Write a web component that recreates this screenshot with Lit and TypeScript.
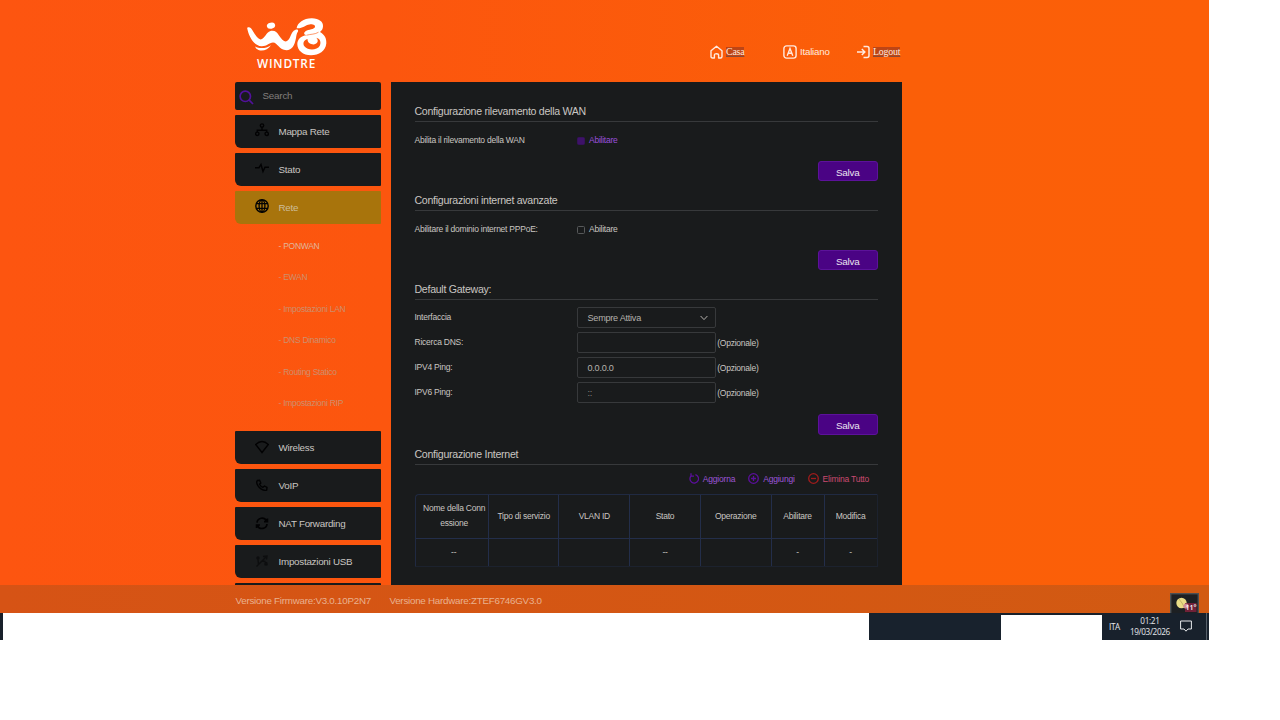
import { LitElement, html, css, svg } from "lit";
import { customElement } from "lit/decorators.js";

const icons: Record<string, unknown> = {
  map: svg`<circle cx="7" cy="2.6" r="1.7"/><circle cx="2.3" cy="10.8" r="1.7"/><circle cx="11.7" cy="10.8" r="1.7"/><path d="M7 4.3V7M2.3 9V7.2H11.7V9"/>`,
  pulse: svg`<path d="M0 6.7H4L6 3.5L8 10.5L10 6.2H14"/>`,
  globe: svg`<circle cx="7" cy="7" r="6.2"/><ellipse cx="7" cy="7" rx="2.9" ry="6" stroke-width="1.3"/><path stroke-width="1.3" d="M7 1V13M1.5 4.7H12.5M1.5 9.3H12.5"/>`,
  wifi: svg`<path d="M7 12.5L.7 4.4Q7-1.2 13.3 4.4Z"/>`,
  phone: svg`<path d="M2.4 2.5L4.6 2.3L5.8 5L4.5 6.2Q5.6 8.4 8 9.3L9.5 8L12 9.3L11.7 12.1Q9.3 13 6 10.9Q1.7 7.6 1.7 4Z"/>`,
  sync: svg`<path stroke-width="1.7" d="M2 6.6A5 5 0 0 1 11.4 4.8M12.4 2.5V5.6H9M12 8A5 5 0 0 1 2.6 9.8M1.6 12.1V9H5"/>`,
  usb: svg`<path d="M1.5 12.5L11.5 2.5M3.5 10.5L3 5.5M7 7L10.5 7.5M8 2.5L12 2L11.5 5.5M9.5 10.8H12.5"/><circle cx="3" cy="4" r="1"/><circle cx="11" cy="9.5" r="1"/>`,
};

const top = [
  { label: "Mappa Rete", icon: "map" },
  { label: "Stato", icon: "pulse" },
  { label: "Rete", icon: "globe", on: true },
];
const bottom = [
  { label: "Wireless", icon: "wifi" },
  { label: "VoIP", icon: "phone" },
  { label: "NAT Forwarding", icon: "sync" },
  { label: "Impostazioni USB", icon: "usb", dim: true },
  { label: "", icon: "" },
];
const sub = ["PONWAN", "EWAN", "Impostazioni LAN", "DNS Dinamico", "Routing Statico", "Impostazioni RIP"];

@customElement("app-root")
export class AppRoot extends LitElement {
  static styles = css`
    :host { display: block; width: 1280px; height: 720px; overflow: hidden; background: #fff; font-family: "Liberation Sans", Arial, sans-serif; color: #c9c6c2; }
    * { box-sizing: border-box; }
    svg { display: block; fill: none; stroke: currentColor; flex: none; }
    .desk { width: 1209px; height: 640px; display: flex; flex-direction: column; }
    .site { height: 585.3px; background: linear-gradient(90deg, #fd5510 0, #fc560e 32%, #fb5f08 75%, #fc5f08 100%); display: flex; flex-direction: column; overflow: hidden; flex: none; }
    .head { height: 82px; padding-left: 246px; display: flex; flex: none; color: #fff; }
    .logo { width: 84px; padding-top: 17px; flex: none; }
    .logo svg { fill: #fff; stroke: none; }
    .brand { font: 600 11.8px/12px "Open Sans", sans-serif; letter-spacing: .8px; padding-left: 11px; margin-top: 1px; white-space: nowrap; }
    .links { display: flex; padding-top: 45px; margin-left: 380px; font-size: 9.7px; letter-spacing: -.2px; line-height: 14px; color: #ffeadf; }
    .link { display: flex; gap: 3px; height: 14px; align-items: center; }
    .home { width: 73px; }
    .lang { width: 74px; }
    .pick { font: 9.9px/10px "Liberation Serif", serif; background: #bd4516; text-decoration: underline; text-decoration-color: #8b4a35; }
    .body { display: flex; padding-left: 235px; gap: 10px; height: 503.3px; }
    .side { width: 145.5px; flex: none; }
    .search { height: 27.5px; margin-bottom: 5px; background: #191b1c; border-radius: 2px; display: flex; align-items: center; padding: 1px 0 0 3.5px; gap: 9px; font-size: 9.8px; letter-spacing: -.2px; line-height: 12px; color: #817e7b; }
    .search svg { color: #51119a; margin-top: 2px; }
    .item { height: 33px; margin-bottom: 5px; background: #191b1c; border-radius: 1px 1px 1px 6px; display: flex; align-items: center; padding: 0 0 0 19.5px; gap: 10px; font-size: 9.8px; letter-spacing: -.25px; }
    .item svg { color: #020203; stroke-width: 1.4; margin-top: -2px; }
    .item.on { background: #a8740c; color: #cdbd9a; }
    .item.dim svg { color: #0d0e0f; }
    .subs { height: 202.5px; padding: 2.5px 0 0 43.5px; font-size: 8.5px; letter-spacing: -.27px; color: #cd8f6d; }
    .subs div { height: 31.4px; line-height: 31.4px; }
    .subs div:first-child { color: #e2b49a; }
    .main { width: 511.5px; background: #191b1c; padding: 19px 24px 0; flex: none; font-size: 8.5px; letter-spacing: -.24px; }
    .title { height: 21px; line-height: 21px; font-size: 10.6px; letter-spacing: -.28px; border-bottom: 1px solid #37393b; }
    .row { height: 38.5px; display: flex; line-height: 10px; padding-top: 13px; }
    .cell { width: 162px; }
    .check { display: flex; align-items: center; height: 10px; gap: 4px; }
    .box { width: 8.5px; height: 8.5px; border: 1px solid #57595a; border-radius: 1.5px; margin-top: 2px; }
    .sel { color: #9a50dc; }
    .sel .box { background: #3e1269; border-color: #35125a; }
    .btn { width: 60.5px; height: 20.5px; margin: 0 0 9.2px auto; background: #4a0384; border: 1px solid #5c129a; border-radius: 3px; color: #eae2f0; font-size: 9.9px; letter-spacing: -.26px; line-height: 21px; text-align: center; }
    .fields { padding: 7px 0 11px; display: grid; gap: 4px; }
    .field { display: flex; height: 21px; }
    .field .cell { line-height: 21px; }
    .inp { width: 139.5px; height: 21px; border: 1px solid #37393b; border-radius: 2px; padding: 1px 7px 0 10px; display: flex; align-items: center; justify-content: space-between; font-size: 9.1px; color: #b5b2ad; }
    .ph { color: #858481; }
    .opt { padding: 1px 0 0 1.2px; line-height: 21px; }
    .acts { height: 29px; display: flex; justify-content: flex-end; align-items: center; padding: 0 9px 2px 0; gap: 13px; }
    .act { display: flex; gap: 4px; align-items: center; color: #9d55d8; letter-spacing: -.21px; }
    .act svg { color: #5b0f9c; }
    .del { color: #c94a70; }
    .del svg { color: #a01c1c; }
    .tbl { width: 463px; display: grid; grid-template-columns: 73.3px 70.7px 70.7px 70.7px 70.7px 53px 1fr; grid-template-rows: 43.5px 27.5px; border: 1px solid #202a42; border-right-color: #1c222e; border-bottom-color: #1c222e; border-radius: 4px 1px 0 1px; }
    .tbl div { display: flex; align-items: center; justify-content: center; text-align: center; line-height: 15.5px; border-right: 1px solid #232e4a; white-space: pre; }
    .tbl div:nth-child(7n) { border-right: 0; }
    .tbl div:nth-child(1) { padding-left: 5px; }
    .tbl div:nth-child(8) { padding-left: 4px; }
    .tbl div:nth-child(-n+7) { border-bottom: 1px solid #232e4a; }
    .foot { height: 27.7px; flex: none; background: linear-gradient(90deg, #d65315, #d25a12); padding-left: 235.5px; display: flex; gap: 18.5px; font-size: 9.8px; letter-spacing: -.25px; line-height: 31px; color: #e9b18f; position: relative; }
    .weather { position: absolute; right: 10px; top: 8px; width: 29px; height: 20px; letter-spacing: 0; }
    .weather svg { stroke: none; }
    .temp { font: 600 7px "Open Sans", sans-serif; fill: #fff; }
    .bar { flex: 1; display: flex; color: #e7e9ec; background: #fff; }
    .edge { width: 2.5px; background: #18202a; }
    .dark { margin-left: 866.5px; width: 132px; background: #18222d; }
    .gap { width: 101px; border-top: 2px solid #18202a; }
    .tray { width: 107px; background: #18212c; display: flex; align-items: center; font: 8.2px/11.7px "Open Sans", sans-serif; letter-spacing: -.35px; padding-left: 7px; border-right: 1px solid #18212c; }
    .clock { width: 42px; text-align: center; margin: 0 9.5px 0 9px; white-space: nowrap; }
    .line { width: 1px; background: #56606a; height: 27px; margin-left: 14px; }
  `;

  item(i: any) {
    return html`<div class="item ${i.on ? "on" : ""} ${i.dim ? "dim" : ""}">
      <svg width="14" height="14" viewBox="0 0 14 14">${icons[i.icon]}</svg>${i.label}</div>`;
  }

  field(label: string, value: string, cls = "") {
    return html`<div class="field"><div class="cell">${label}</div><div class="inp ${cls}">${value}</div><div class="opt">(Opzionale)</div></div>`;
  }

  render() {
    return html`<div class="desk">
      <div class="site">
        <div class="head">
          <div class="logo">
            <svg width="84" height="39" viewBox="0 0 84 39">
              <ellipse cx="25" cy="8.7" rx="4.2" ry="3" transform="rotate(-12 25 8.7)"/>
              <path d="M1.2 11.2C1 10 3.8 9.8 5 11.2C8 15 10.5 21.5 14.5 22.5C19 22 20 15 24.5 14C29 13.2 31 15.5 33 18.5C35.5 22 38 25 40.5 24.3C45 22.5 44 15 49.5 12.8C51.5 12.2 52.5 13 52 14.5C50.5 16.5 50.5 18 50 21C48.5 29 46 33 40.5 33.2C33 33.2 31.5 25.5 27 25.6C23 26 20.5 29.5 15.5 29.3C7 28.5 2.5 18 1.2 11.2Z"/>
              <path d="M9 29.5C14 32 20 31.5 25 28.2C22 33 16.5 34.5 12.5 33Q9.5 31.5 9 29.5Z"/>
              <path d="M50.6 11.2C51.5 5.5 58 1 66 1.2C73 1.5 77.5 4.5 77 9.5C76.8 12 75.8 13.5 74 15C78.5 17.5 80.8 21.5 80.3 26.5C79.5 34 73 38.3 65 38.3C57 38.3 51.3 33.5 51.3 27C51.5 22 55 18.8 60.5 18.2C58.5 17.8 57.5 16.8 58.5 15.2C61 12 66.5 13 68.8 10.4C69.8 8.2 67 7 63.5 7.4C59 8 56 12 50.6 11.2Z"/>
              <path fill="#fc560e" d="M61.5 22C57.8 23 56.2 26.5 58.6 29.6C62 33.8 71 33.6 73.8 28.8C75.5 25 73.8 21.5 70.3 20.8C73 23.4 71.8 27 67.8 27.4C64 27.5 61.5 25.3 61.5 22Z"/>
              <path fill="none" stroke="#fc560e" stroke-width=".6" d="M60.5 18.2C65 17 69 17.5 72.5 15.2"/>
            </svg>
            <div class="brand">WINDTRE</div>
          </div>
          <div class="links">
            <div class="link home"><svg width="13" height="14" viewBox="0 0 13 14" stroke-width="1.4" stroke-linejoin="round"><path d="M1 5.8L6.5 1.2L12 5.8V11.5Q12 13 10.5 13H8.6V10Q8.6 8.7 6.5 8.7T4.4 10V13H2.5Q1 13 1 11.5Z"/></svg><span class="pick">Casa</span></div>
            <div class="link lang"><svg width="14" height="14" viewBox="0 0 14 14" stroke-width="1.4"><rect x=".9" y=".9" width="12.2" height="12.2" rx="2.6"/><path d="M4.2 10.7L7 3.5L9.8 10.7M5.2 8.3H8.8"/></svg><span>Italiano</span></div>
            <div class="link"><svg width="13" height="14" viewBox="0 0 13 14" stroke-width="1.5"><path d="M0 7H7.5M4.8 4L7.8 7L4.8 10M6.5 1.5H10Q12 1.5 12 3.5V10.5Q12 12.5 10 12.5H6.5"/></svg><span class="pick">Logout</span></div>
          </div>
        </div>
        <div class="body">
          <div class="side">
            <div class="search"><svg width="15" height="15" viewBox="0 0 15 15" stroke-width="1.7"><circle cx="6.3" cy="6.3" r="5.2"/><path d="M10.2 10.2L14 14"/></svg>Search</div>
            ${top.map((i) => this.item(i))}
            <div class="subs">${sub.map((s) => html`<div>- ${s}</div>`)}</div>
            ${bottom.map((i) => this.item(i))}
          </div>
          <div class="main">
            <div class="title">Configurazione rilevamento della WAN</div>
            <div class="row"><div class="cell">Abilita il rilevamento della WAN</div><div class="check sel"><span class="box"></span>Abilitare</div></div>
            <div class="btn">Salva</div>
            <div class="title">Configurazioni internet avanzate</div>
            <div class="row"><div class="cell">Abilitare il dominio internet PPPoE:</div><div class="check"><span class="box"></span>Abilitare</div></div>
            <div class="btn">Salva</div>
            <div class="title">Default Gateway:</div>
            <div class="fields">
              <div class="field"><div class="cell">Interfaccia</div><div class="inp">Sempre Attiva<svg width="8" height="6" viewBox="0 0 8 6"><path d="M.6 1L4 4.6L7.4 1"/></svg></div></div>
              ${this.field("Ricerca DNS:", "")}
              ${this.field("IPV4 Ping:", "0.0.0.0")}
              ${this.field("IPV6 Ping:", "::", "ph")}
            </div>
            <div class="btn">Salva</div>
            <div class="title">Configurazione Internet</div>
            <div class="acts">
              <div class="act"><svg width="10" height="11" viewBox="0 0 10 11" stroke-width="1.3"><path d="M2.2 2.7A4.3 4.3 0 1 0 6.4 1.6M2 .2V3.2H5"/></svg>Aggiorna</div>
              <div class="act"><svg width="11" height="11" viewBox="0 0 11 11" stroke-width="1.3"><circle cx="5.5" cy="5.5" r="4.8"/><path d="M3 5.5H8M5.5 3V8"/></svg>Aggiungi</div>
              <div class="act del"><svg width="11" height="11" viewBox="0 0 11 11" stroke-width="1.3"><circle cx="5.5" cy="5.5" r="4.8"/><path d="M3 5.5H8"/></svg>Elimina Tutto</div>
            </div>
            <div class="tbl">
              ${["Nome della Conn\nessione", "Tipo di servizio", "VLAN ID", "Stato", "Operazione", "Abilitare", "Modifica", "--", "", "", "--", "", "-", "-"].map((t) => html`<div>${t}</div>`)}
            </div>
          </div>
        </div>
      </div>
      <div class="foot"><span>Versione Firmware:V3.0.10P2N7</span><span>Versione Hardware:ZTEF6746GV3.0</span>
        <div class="weather"><svg width="29" height="20" viewBox="0 0 29 20"><rect x=".7" y=".7" width="27.6" height="21" fill="#1d2023" stroke="#4b5054" stroke-width="1.4"/><circle cx="11.5" cy="10" r="5.2" fill="#e9dc86"/><path d="M9 6L12 10L14 14" stroke="#b9a95e" stroke-width=".8"/><rect x="15" y="10" width="11.5" height="9" fill="#702138"/><circle cx="16" cy="13" r="2.6" fill="#cf8c95"/><text class="temp" x="15.5" y="17">11°</text></svg></div>
      </div>
      <div class="bar"><div class="edge"></div><div class="dark"></div><div class="gap"></div>
        <div class="tray"><span>ITA</span><div class="clock">01:21<br>19/03/2026</div><svg width="12" height="12" viewBox="0 0 12 12"><path d="M.6 1H11.4V9H8L6 11.2L4 9H.6Z"/></svg><span class="line"></span></div>
      </div>
    </div>`;
  }
}
